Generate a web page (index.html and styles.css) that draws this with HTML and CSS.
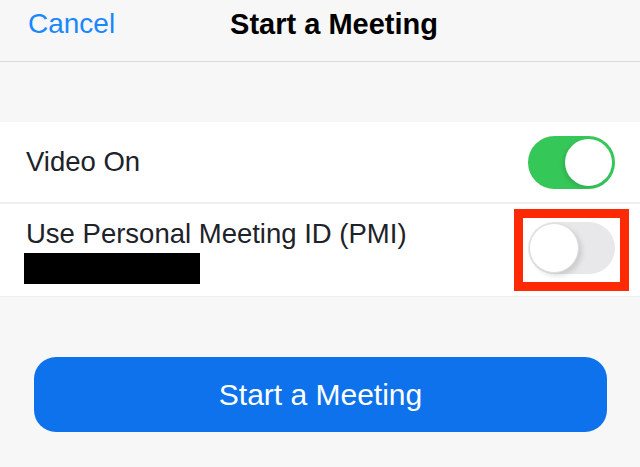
FILE: index.html
```html
<!doctype html>
<html lang="en">
    <head>
        <meta charset="UTF-8" />
        <meta name="viewport" content="width=device-width, initial-scale=1.0" />
        <title>Start a Meeting</title>
        <link rel="stylesheet" href="styles.css">
    </head>
    <body>
        <header class="nav-bar">
            <a class="nav-cancel" href="#">Cancel</a>
            <h1 class="nav-title">Start a Meeting</h1>
            <span></span>
        </header>

        <section class="settings">
            <div class="setting-row">
                <span class="setting-label">Video On</span>
                <span class="switch switch-on"><span class="knob"></span></span>
            </div>
            <div class="setting-row setting-row-tall">
                <div class="setting-text">
                    <span class="setting-label">Use Personal Meeting ID (PMI)</span>
                    <div class="redacted"></div>
                </div>
                <div class="highlight">
                    <span class="switch switch-off"><span class="knob"></span></span>
                </div>
            </div>
        </section>

        <div class="actions">
            <button class="start-button">Start a Meeting</button>
        </div>
    </body>
</html>
```

FILE: styles.css
```css
:root {
    --page-bg: #f7f7f7;
    --ios-blue: #1a87ff;
    --zoom-blue: #0e72ed;
    --switch-green: #36c759;
    --label-color: #202229;
}

body {
    font-family: "Liberation Sans", Arial, sans-serif;
    margin: 0;
    padding: 0;
    background-color: var(--page-bg);
    color: var(--label-color);
}

.nav-bar {
    display: grid;
    grid-template-columns: 1fr auto 1fr;
    align-items: start;
    height: 62px;
    padding: 7px 0 0 28px;
    box-sizing: border-box;
    border-bottom: 1px solid #d9d9d9;
}

.nav-cancel {
    color: var(--ios-blue);
    text-decoration: none;
    font-size: 28px;
    line-height: 34px;
}

.nav-title {
    margin: 0;
    font-size: 29px;
    line-height: 34px;
    font-weight: bold;
    color: #000;
}

.settings {
    margin-top: 60px;
    background: white;
}

.setting-row {
    display: flex;
    align-items: center;
    justify-content: space-between;
    height: 80px;
    padding: 0 25px 0 26px;
    border-bottom: 2px solid #efefef;
}

.setting-row-tall {
    height: 92px;
    padding-right: 11px;
    border-bottom: 1px solid #efefef;
}

.setting-label {
    font-size: 27.5px;
    line-height: 34px;
}

.setting-text {
    display: flex;
    flex-direction: column;
    gap: 2px;
}

.redacted {
    width: 176px;
    height: 31px;
    margin-left: -2px;
    background: #000;
}

.highlight {
    border: 9px solid #fe2a05;
    padding: 4px 5px 8px 5px;
    background: white;
}

.switch {
    display: flex;
    align-items: center;
    width: 87px;
    height: 53px;
    border-radius: 27px;
    padding: 3px;
    box-sizing: border-box;
}

.switch-on {
    background: var(--switch-green);
    justify-content: flex-end;
}

.switch-off {
    background: #e8e8ea;
    justify-content: flex-start;
    padding: 1px;
    height: 52px;
}

.knob {
    width: 47px;
    height: 47px;
    border-radius: 50%;
    background: white;
    box-shadow: -2px 2px 4px rgba(0, 0, 0, 0.12);
}

.switch-off .knob {
    width: 50px;
    height: 50px;
    border: 1px solid #dcdcdc;
    box-sizing: border-box;
    box-shadow: 3px 3px 5px rgba(0, 0, 0, 0.12);
}

.actions {
    padding: 60px 33px 0 34px;
}

.start-button {
    display: block;
    width: 100%;
    height: 75px;
    border: none;
    border-radius: 22px;
    background: var(--zoom-blue);
    color: white;
    font-family: "Liberation Sans", Arial, sans-serif;
    font-size: 30px;
    cursor: pointer;
}
```
